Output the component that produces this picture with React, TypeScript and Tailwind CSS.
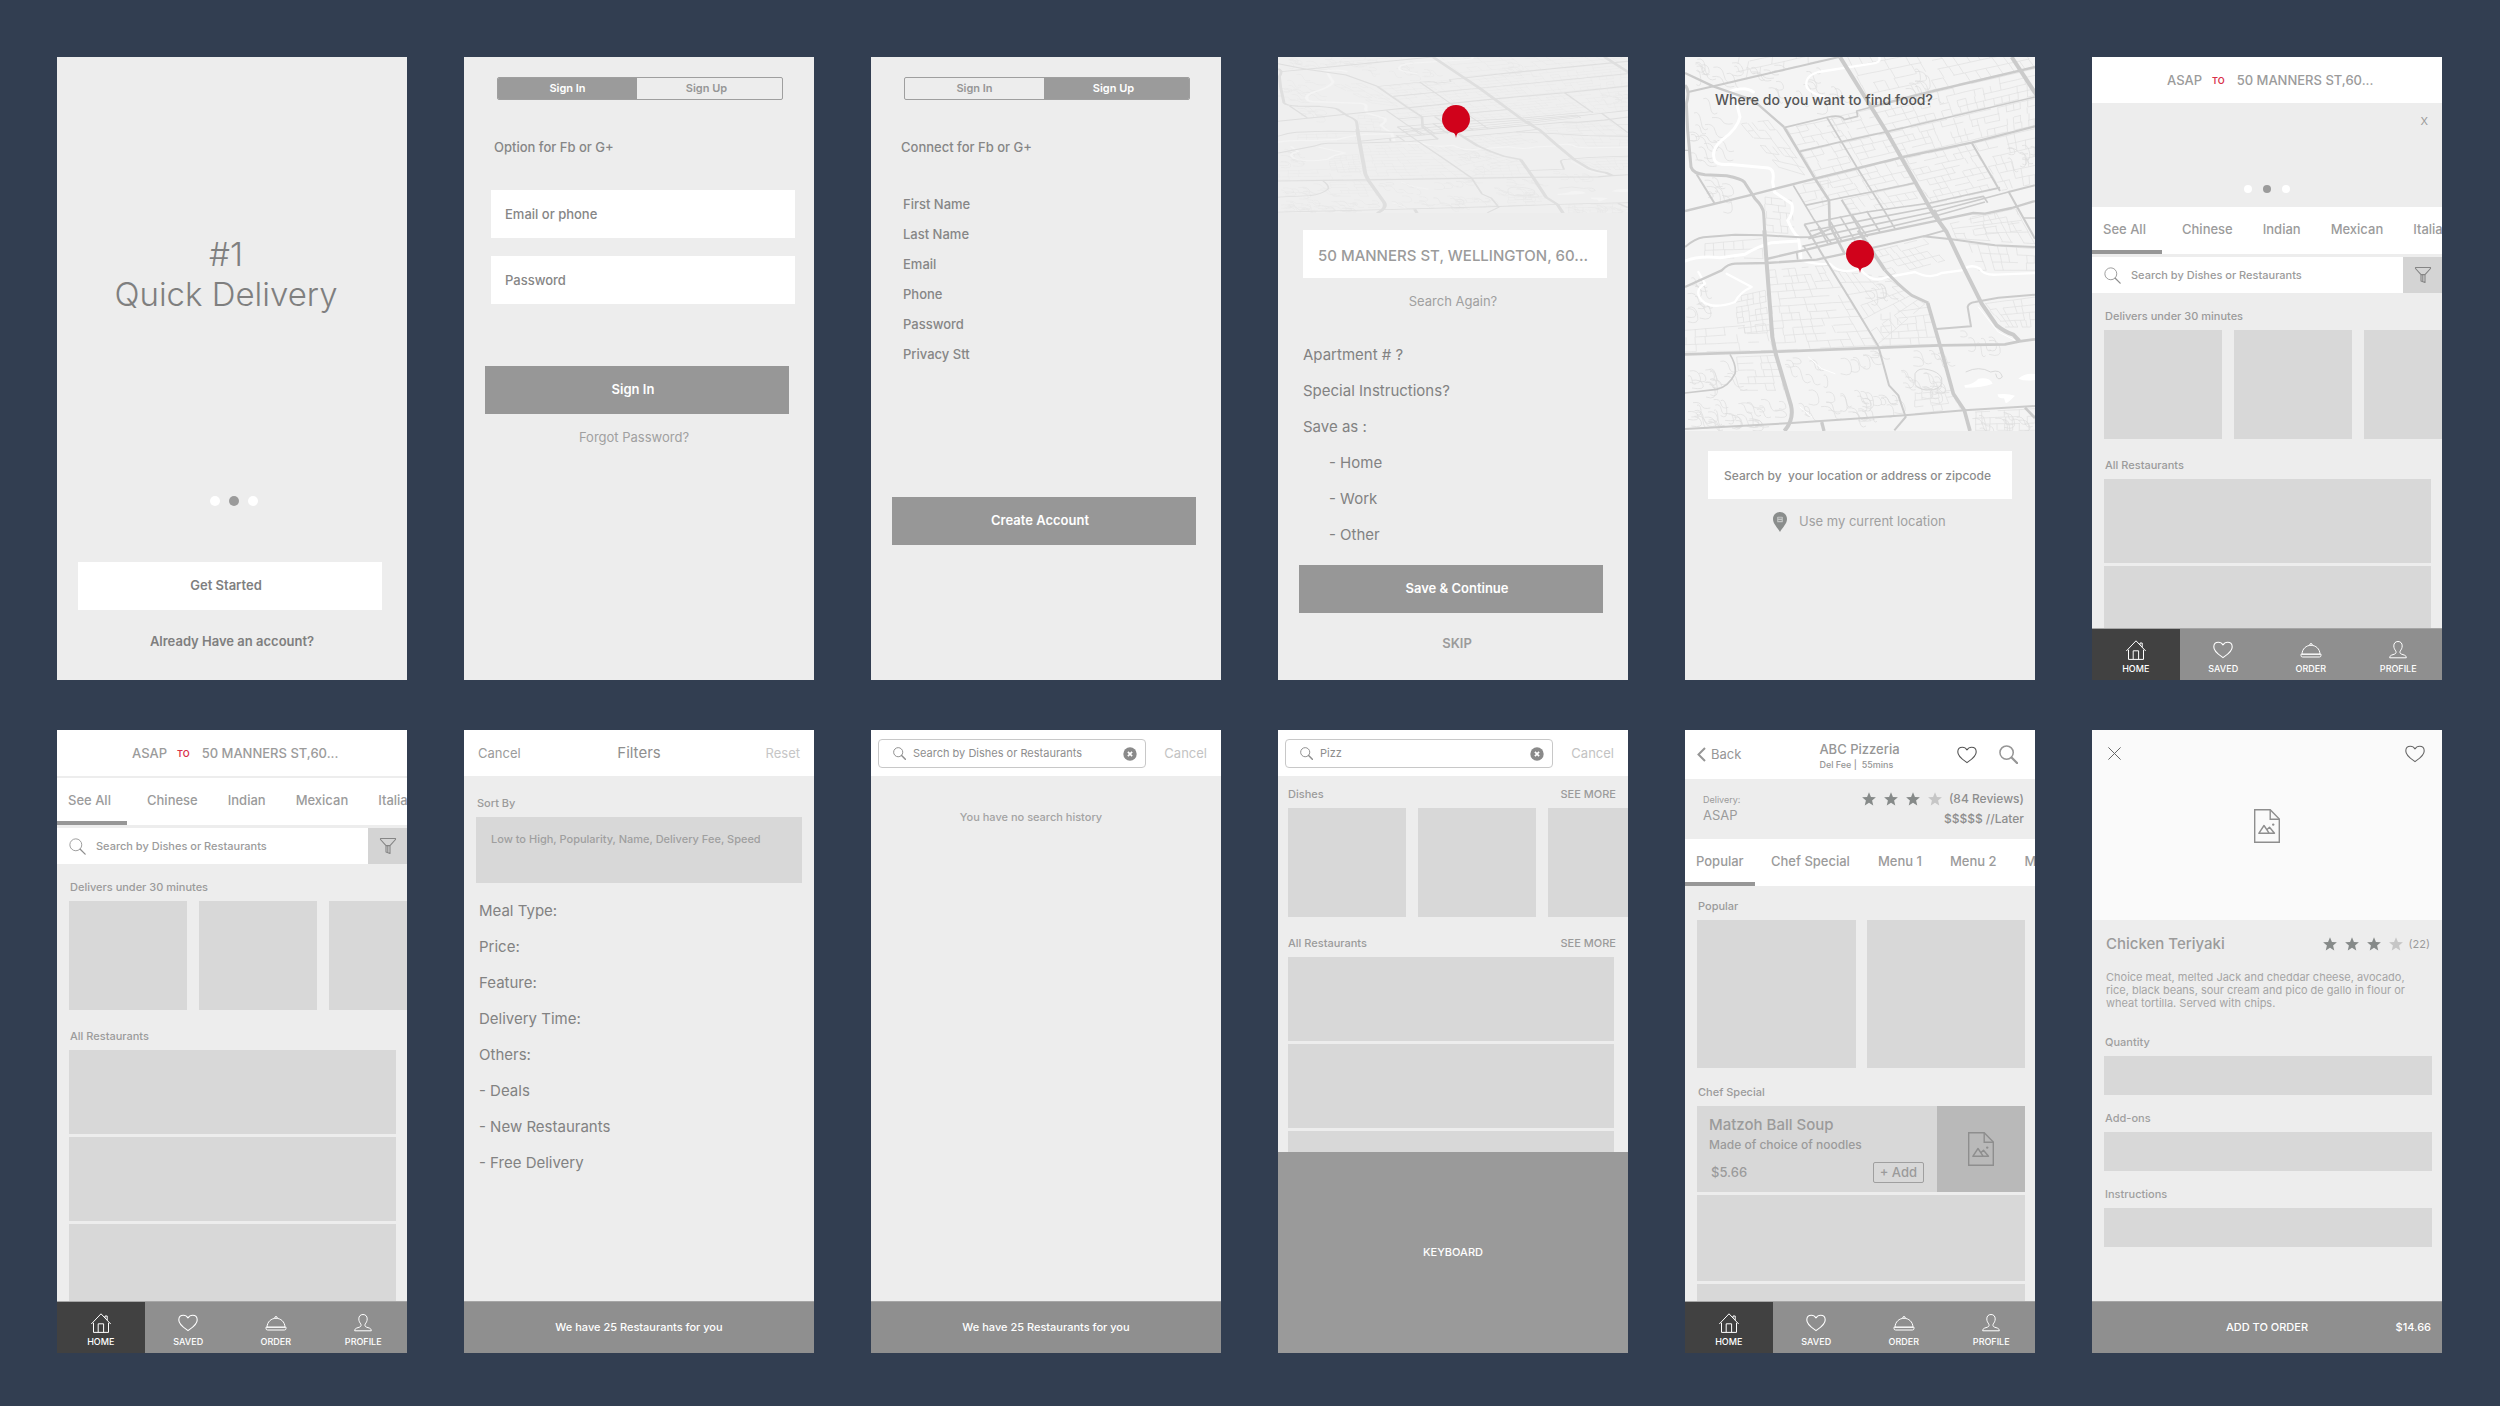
import React from "react";

type Children = { children?: React.ReactNode };

/* ------------------------------------------------------------------ */
/* Icons                                                               */
/* ------------------------------------------------------------------ */

function SearchIcon({ className = "size-4", weight = 1.2 }: { className?: string; weight?: number }) {
  return (
    <svg viewBox="0 0 20 20" className={className} fill="none" stroke="currentColor" strokeWidth={weight} aria-hidden="true">
      <circle cx="8" cy="8" r="7" />
      <path d="M13.2 13.2 19 19" strokeWidth={weight * 1.5} strokeLinecap="round" />
    </svg>
  );
}

function HeartIcon({ className = "size-5" }: { className?: string }) {
  return (
    <svg viewBox="0 0 20 20" className={className} fill="none" stroke="currentColor" strokeWidth="1.1" strokeLinejoin="round" aria-hidden="true">
      <path d="M10 17.6C7.2 15.4.8 11.8.8 6.9.8 4 2.800 2.200 5.400 2.200 7.400 2.200 9 3.200 10 4.900 11 3.200 12.600 2.200 14.600 2.200 17.200 2.200 19.200 4 19.200 6.900 19.200 11.800 12.800 15.400 10 17.600Z" />
    </svg>
  );
}

function HomeIcon() {
  return (
    <svg viewBox="0 0 20 20" className="size-5" fill="none" stroke="currentColor" strokeWidth="1" strokeLinejoin="round" aria-hidden="true">
      <path d="M2.500 9.800V19.400H17.500V9.800" />
      <path d="M.5 10.800 10 .8l9.500 10" strokeLinecap="round" />
      <path d="M14 4.800V3h2.200v4.200" />
      <path d="M7.200 19.400v-8.600h5.400v8.600" />
    </svg>
  );
}

function ClocheIcon() {
  return (
    <svg viewBox="0 0 22 20" className="h-5 w-[22px]" fill="none" stroke="currentColor" strokeWidth="1" strokeLinejoin="round" aria-hidden="true">
      <path d="M2 14.200C2.200 8.800 6.200 5.300 11 5.300s8.800 3.500 9 8.900Z" />
      <path d="M1 14.200h20v1.200q0 1.600-1.600 1.600H2.600Q1 17 1 15.400Z" />
      <path d="M9.700 5.200q0-1.700 1.300-1.700t1.300 1.700" />
    </svg>
  );
}

function PersonIcon() {
  return (
    <svg viewBox="0 0 20 20" className="size-5" fill="none" stroke="currentColor" strokeWidth="1" strokeLinejoin="round" aria-hidden="true">
      <path d="M10 1.500c2.700 0 4.200 1.800 4.200 4.400 0 2.300-1 3.700-1.900 5 -.7 1.200-.4 2.600.9 3.100l3.200 1.100c1.300.5 1.900 1.300 1.900 2.700H1.700c0-1.400.6-2.200 1.900-2.700l3.200-1.100c1.300-.5 1.600-1.900.9-3.100-.9-1.300-1.900-2.700-1.900-5 0-2.600 1.500-4.400 4.200-4.400Z" />
    </svg>
  );
}

function FunnelIcon() {
  return (
    <svg viewBox="0 0 18 18" className="size-[18px]" fill="none" stroke="currentColor" strokeWidth="1.100" strokeLinejoin="round" aria-hidden="true">
      <path d="M1.500 1.500h15v1L11 8.600v7.900l-4-1.600V8.600L1.500 2.500Z" />
      <path d="M7 8.600h4M8.800 8.600v7" />
    </svg>
  );
}

function ClearIcon() {
  return (
    <svg viewBox="0 0 14 14" className="size-3.5" aria-hidden="true">
      <circle cx="7" cy="7" r="6.700" fill="#8a8a8a" />
      <path d="m4.900 4.900 4.200 4.200m0-4.200L4.900 9.100" stroke="#fff" strokeWidth="1.700" />
    </svg>
  );
}

function PictureIcon() {
  return (
    <svg viewBox="0 0 26 34" className="h-[34px] w-[26px]" fill="none" stroke="currentColor" strokeWidth="1.400" aria-hidden="true">
      <path d="M.7.700H16.200L25.300 10V33.300H.7Z" />
      <path d="M16.200.700V10.300H25.300" />
      <path d="M4.800 24.300 10 16.500l5.300 7.800Z" strokeLinejoin="round" />
      <path d="m12.800 20.700 2.700-2.500 5 6.100h-5.200" strokeLinejoin="round" />
      <circle cx="19.200" cy="15.600" r="1.200" fill="currentColor" stroke="none" />
    </svg>
  );
}

function StarIcon({ dim }: { dim?: boolean }) {
  return (
    <svg viewBox="0 0 24 24" className="size-3.5" fill={dim ? "#c6c6c6" : "#868a89"} aria-hidden="true">
      <path d="m12 .5 3.300 7.900 8.500.700-6.500 5.600 2 8.300L12 18.600l-7.300 4.400 2-8.300L.2 9.100l8.500-.700Z" />
    </svg>
  );
}

function Stars() {
  return (
    <span className="flex gap-2" role="img" aria-label="3 of 4 stars">
      <StarIcon />
      <StarIcon />
      <StarIcon />
      <StarIcon dim />
    </span>
  );
}

function RedPin() {
  return (
    <svg viewBox="0 0 86 101" className="h-[33px] w-7" fill="#d0021b" aria-hidden="true">
      <circle cx="43" cy="43" r="43" />
      <path d="M32 82q9 5 11 19 2-14 11-19Z" />
    </svg>
  );
}

/* ------------------------------------------------------------------ */
/* Map                                                                 */
/* ------------------------------------------------------------------ */

type Pt = [number, number];

/* Local streets of one district: a broken lattice stretched over four corners. */
function district(corners: [Pt, Pt, Pt, Pt], cols: number, rows: number, seed: number): string {
  let s = seed * 7919 + 13;
  const rand = () => {
    s = (s * 1103515245 + 12345) % 2147483648;
    return s / 2147483648;
  };
  const [a, b, c, d] = corners;
  const at = (u: number, v: number) => {
    const x = (a[0] * (1 - u) + b[0] * u) * (1 - v) + (d[0] * (1 - u) + c[0] * u) * v;
    const y = (a[1] * (1 - u) + b[1] * u) * (1 - v) + (d[1] * (1 - u) + c[1] * u) * v;
    return `${x.toFixed(0)} ${y.toFixed(0)}`;
  };
  let path = "";
  for (let j = 0; j <= rows; j++) {
    for (let i = 0; i < cols; i++) {
      if (rand() < 0.78) path += `M${at(i / cols, j / rows)}L${at((i + 1) / cols, j / rows)}`;
    }
  }
  for (let i = 0; i <= cols; i++) {
    for (let j = 0; j < rows; j++) {
      if (rand() < 0.62) {
        const o = (rand() - 0.5) * 0.25;
        const u = (i + o) / cols;
        path += `M${at(u, j / rows)}L${at(u, (j + 1) / rows)}`;
      }
    }
  }
  return path;
}

/* Winding suburb streets. */
function suburb(x: number, y: number, w: number, h: number, n: number, seed: number): string {
  let s = seed * 104729 + 7;
  const rand = () => {
    s = (s * 1103515245 + 12345) % 2147483648;
    return s / 2147483648;
  };
  let path = "";
  for (let k = 0; k < n; k++) {
    const px = x + rand() * w;
    const py = y + rand() * h;
    const dx = 12 + rand() * 22;
    const dy = 8 + rand() * 18;
    path += `M${px.toFixed(0)} ${py.toFixed(0)}q${(dx * 0.8).toFixed(0)} ${(-dy * 0.3).toFixed(0)} ${dx.toFixed(0)} ${dy.toFixed(0)}t${(rand() < 0.5 ? -dx : dx).toFixed(0)} ${(dy * 0.8).toFixed(0)}`;
  }
  return path;
}

const LOCAL_STREETS = [
  district([[490, 0], [960, -90], [1050, 30], [560, 140]], 15, 5, 1),
  district([[560, 150], [1050, 35], [1050, 115], [605, 222]], 18, 4, 2),
  district([[610, 228], [1050, 125], [1050, 205], [650, 298]], 20, 4, 3),
  district([[305, 215], [470, 180], [515, 248], [345, 280]], 6, 4, 4),
  district([[440, 182], [565, 155], [605, 222], [475, 250]], 5, 3, 5),
  district([[348, 285], [610, 228], [650, 300], [392, 362]], 9, 4, 6),
  district([[395, 368], [655, 304], [697, 374], [440, 430]], 9, 4, 7),
  district([[663, 304], [860, 260], [940, 395], [742, 440]], 9, 8, 8),
  district([[870, 258], [1050, 215], [1050, 380], [950, 400]], 6, 6, 9),
  district([[470, 430], [697, 378], [740, 440], [500, 470]], 9, 3, 10),
  district([[330, 385], [430, 370], [432, 440], [370, 460]], 4, 3, 11),
  district([[170, 200], [250, 190], [380, 360], [280, 330]], 5, 6, 12),
  district([[560, 585], [715, 545], [780, 610], [610, 655]], 8, 4, 13),
  district([[795, 500], [990, 455], [1050, 560], [815, 545]], 7, 3, 14),
  district([[850, 560], [1050, 575], [1050, 640], [880, 640]], 7, 3, 15),
  district([[250, 640], [430, 625], [575, 865], [270, 880]], 9, 11, 16),
  district([[440, 640], [600, 660], [720, 740], [580, 860]], 8, 6, 17),
  district([[590, 770], [735, 750], [760, 862], [590, 865]], 6, 5, 18),
  district([[240, 420], [320, 430], [330, 530], [245, 525]], 4, 5, 19),
  district([[60, 560], [230, 545], [235, 605], [60, 600]], 6, 2, 20),
  district([[150, 720], [240, 700], [255, 820], [160, 830]], 5, 7, 21),
  district([[0, 820], [240, 800], [260, 880], [0, 885]], 8, 3, 22),
  district([[900, 740], [1050, 720], [1050, 810], [960, 810]], 7, 4, 23),
  district([[155, 900], [270, 895], [300, 1000], [165, 1000]], 5, 5, 24),
  district([[690, 1010], [800, 1000], [825, 1055], [690, 1070]], 5, 3, 25),
  district([[870, 1065], [1050, 1055], [1050, 1120], [870, 1120]], 8, 3, 26),
  district([[860, 480], [990, 450], [1010, 520], [870, 535]], 4, 3, 27),
  district([[130, 0], [440, -60], [450, 0], [110, 80]], 9, 3, 28),
];

const SUBURB_STREETS = [
  suburb(10, 120, 90, 190, 16, 1),
  suburb(0, 0, 250, 60, 16, 2),
  suburb(250, 20, 200, 110, 14, 3),
  suburb(620, 30, 130, 70, 8, 4),
  suburb(0, 1020, 290, 80, 34, 5),
  suburb(0, 910, 130, 70, 14, 6),
  suburb(290, 900, 130, 60, 8, 7),
  suburb(330, 1000, 300, 70, 30, 8),
  suburb(640, 880, 130, 120, 22, 9),
  suburb(850, 1065, 190, 50, 14, 10),
  suburb(0, 650, 60, 150, 12, 11),
  suburb(540, 670, 60, 40, 6, 12),
  suburb(460, 870, 110, 40, 8, 13),
  suburb(960, 260, 80, 60, 8, 14),
  suburb(820, 820, 110, 40, 6, 15),
  suburb(40, 360, 90, 70, 8, 16),
];

const ROADS: { w: number; d: string }[] = [
  { w: 12, d: "M465 0 605 225 745 470 785 525 835 630 890 740 935 805Q960 825 985 833L1003 852" },
  { w: 12, d: "M745 460 765 495" },
  { w: 9, d: "M0 85Q16 100 4 140L8 220 18 330Q24 350 60 353L125 356Q170 365 178 375L210 425Q235 450 236 470L240 540" },
  { w: 12, d: "M238 520 245 620 262 840 272 890 318 1045Q328 1088 298 1122" },
  { w: 7, d: "M0 48 85 88 205 130 297 210" },
  { w: 8, d: "M297 210 390 365 432 430 434 505 480 592" },
  { w: 6, d: "M470 428 525 520" },
  { w: 11, d: "M520 520 600 640" },
  { w: 9, d: "M600 640Q640 685 680 715L730 738" },
  { w: 11, d: "M728 738 765 865 805 1010 838 1060 855 1122" },
  { w: 7, d: "M0 462 205 412 390 365 655 300 860 257 1050 208" },
  { w: 6, d: "M10 105 85 88 462 0" },
  { w: 5, d: "M297 212 430 180Q468 172 478 188L518 178 515 162 560 150" },
  { w: 7, d: "M560 150 690 115 860 75 1050 30" },
  { w: 5, d: "M345 283 470 254 610 223 1050 120" },
  { w: 12, d: "M980 0 1055 115" },
  { w: 6, d: "M860 257 945 402" },
  { w: 5, d: "M360 445 480 420 560 405 695 377" },
  { w: 6, d: "M0 570Q30 545 55 541L150 533 240 535 345 541 375 540 445 512" },
  { w: 5, d: "M358 502 545 465 735 438 945 392" },
  { w: 5, d: "M375 522 560 485 745 450 895 418 908 437" },
  { w: 5, d: "M370 545 580 500 745 465 970 405" },
  { w: 6, d: "M970 405 1050 385" },
  { w: 5, d: "M352 568 525 530 740 480 900 435" },
  { w: 7, d: "M245 606 355 580 540 536 760 490 865 468 900 470 980 453 1050 432" },
  { w: 7, d: "M0 690 110 640Q130 620 150 620L245 618 395 608 480 590" },
  { w: 6, d: "M560 573 715 538 800 547 930 565 1050 570" },
  { w: 5, d: "M715 538 780 520" },
  { w: 5, d: "M325 385 385 485 440 560" },
  { w: 6, d: "M358 502 415 598 500 735 580 868 612 985 640 1015 662 1080 628 1120" },
  { w: 5, d: "M425 180 515 330 600 465 630 515" },
  { w: 5, d: "M355 565 380 605M437 495 470 552M465 478 510 550M500 472 548 540M545 462 585 525M335 585 338 608M400 510 430 562" },
  { w: 8, d: "M0 892 270 884 765 865 960 862 1003 853 1050 847" },
  { w: 6, d: "M0 1116 320 1098 660 1075 838 1060 1050 1047" },
  { w: 10, d: "M410 1095 417 1122" },
  { w: 5, d: "M135 892Q155 925 150 950 130 990 95 997L0 1008" },
  { w: 6, d: "M755 816 858 808 848 750Q850 738 870 735L940 722 1050 713" },
  { w: 6, d: "M970 403 1050 545" },
  { w: 4, d: "M1015 483H1050M0 280H10" },
  { w: 8, d: "M1020 1052 1050 1083" },
  { w: 6, d: "M35 352 88 438" },
];

function CityMap({ className }: { className: string }) {
  return (
    <svg viewBox="0 0 1050 1122" preserveAspectRatio="none" className={className} fill="none" aria-hidden="true">
      <rect width="1050" height="1122" fill="#f4f4f4" />
      <path d={LOCAL_STREETS.join("")} stroke="#e0e0e0" strokeWidth="2" />
      <path d={SUBURB_STREETS.join("")} stroke="#dcdcdc" strokeWidth="2" />
      <path d="M690 950q10-20 40-12 30 6 40 25 5 30-25 35-40 5-55-15ZM842 945q40-20 75 0 30-10 35 15-15 15-20-10" stroke="#dadada" strokeWidth="3" />
      <g stroke="#fff" strokeWidth="9" strokeLinejoin="round" strokeLinecap="round">
        <path d="M583 0Q588 18 560 20L400 45Q355 58 366 92 380 110 415 118" strokeWidth="7" />
        <path d="M130 105Q180 85 205 105M150 120 165 180Q158 215 110 250 75 280 90 312 100 325 130 322L250 333Q270 338 263 375L268 405 320 440Q328 465 308 490 325 530 340 540L348 602" />
        <path d="M0 612Q40 595 105 602L180 592Q215 570 260 557L340 552" />
        <path d="M350 610Q400 625 435 620 465 655 525 635 560 680 600 662L690 645Q735 668 770 648L830 640Q860 618 885 635 895 655 935 653L1050 648" strokeWidth="7" />
        <path d="M125 650 200 690Q165 705 150 735 80 760 50 730 25 700 60 680L40 645" strokeWidth="7" />
        <path d="M880 750 940 825 990 850M370 900 410 935 450 950M345 1050 380 1080" strokeWidth="3" />
      </g>
      <path d="M838 985q30-5 42-20 35-5 43 15-30 12-83 12ZM1000 965q20-18 50-14v18q-30 5-50-4ZM938 1012q30-4 52 4-25 25-28 22l-5-14q-20 0-19-12Z" fill="#fff" />
      <g stroke="#cbcbcb" strokeLinejoin="round">
        {ROADS.map((r) => (
          <path key={r.d} d={r.d} strokeWidth={r.w} />
        ))}
      </g>
    </svg>
  );
}

/* ------------------------------------------------------------------ */
/* Shared pieces                                                       */
/* ------------------------------------------------------------------ */

function Phone({ label, children }: Children & { label: string }) {
  return (
    <section aria-label={label} className="flex min-h-[623px] flex-col overflow-hidden bg-[#ededed]">
      {children}
    </section>
  );
}

function Dots({ className, dot }: { className: string; dot: string }) {
  return (
    <div className={`flex ${className}`} aria-hidden="true">
      <span className={`rounded-full bg-white ${dot}`} />
      <span className={`rounded-full bg-[#9b9b9b] ${dot}`} />
      <span className={`rounded-full bg-white ${dot}`} />
    </div>
  );
}

function Segments({ active }: { active: 0 | 1 }) {
  const on = "bg-[#9b9b9b] text-white";
  const off = "text-[#969696]";
  return (
    <div className="mt-5 mr-[31px] ml-[33px] flex h-[23px] overflow-hidden rounded-[2px] border border-[#9f9f9f] text-[11px] font-semibold">
      <button className={`flex-1 ${active === 0 ? on : off}`}>Sign In</button>
      <button className={`flex-1 pr-1.5 ${active === 1 ? on : off}`}>Sign Up</button>
    </div>
  );
}

function PrimaryButton({ className, children }: Children & { className: string }) {
  return (
    <button className={`mr-[25px] ml-[21px] h-12 bg-[#979797] text-[13px] font-semibold text-white ${className}`}>
      {children}
    </button>
  );
}

function DeliveryHeader() {
  return (
    <header className="flex h-[46px] shrink-0 items-center bg-white pt-0.5 pl-[75px] text-[13px] font-medium text-[#9b9b9b]">
      <span>ASAP</span>
      <span className="mr-3 ml-2.5 text-[9px] font-semibold text-[#d9304a]">TO</span>
      <span className="whitespace-nowrap">50 MANNERS ST,60...</span>
    </header>
  );
}

function Tabs({ items, gap, firstGap }: { items: string[]; gap: string; firstGap: string }) {
  return (
    <nav className="flex h-[47px] shrink-0 overflow-hidden bg-white text-[13px] font-medium text-[#9b9b9b]">
      <button className={`w-[70px] shrink-0 border-b-4 border-[#979797] pt-0.5 pl-[11px] text-left ${firstGap}`}>
        {items[0]}
      </button>
      <div className={`flex ${gap}`}>
        {items.slice(1).map((item) => (
          <button key={item} className="shrink-0 border-b-4 border-transparent pt-0.5 whitespace-nowrap">
            {item}
          </button>
        ))}
      </div>
    </nav>
  );
}

const CUISINES = ["See All", "Chinese", "Indian", "Mexican", "Italian"];

function SearchRow() {
  return (
    <div className="mt-[3px] flex h-9 shrink-0 bg-white">
      <label className="flex flex-1 items-center gap-2.5 pl-3 text-[#8e8e8e]">
        <SearchIcon className="size-[17px]" weight={1} />
        <input
          type="text"
          aria-label="Search"
          placeholder="Search by Dishes or Restaurants"
          className="w-full min-w-0 flex-1 text-[11px] font-medium outline-none placeholder:text-[#9b9b9b]"
        />
      </label>
      <button aria-label="Filter" className="flex w-[39px] items-center justify-center bg-[#d4d4d4] text-[#858585]">
        <FunnelIcon />
      </button>
    </div>
  );
}

function SectionTitle({ className = "", children }: Children & { className?: string }) {
  return <h3 className={`text-[11px] leading-4 font-medium text-[#9b9b9b] ${className}`}>{children}</h3>;
}

function Tiles() {
  return (
    <div className="flex gap-3 overflow-hidden">
      {[0, 1, 2].map((n) => (
        <div key={n} className="h-[109px] w-[118px] shrink-0 bg-[#d8d8d8]" />
      ))}
    </div>
  );
}

function Rows({ count }: { count: number }) {
  return (
    <div className="mt-1.5 mr-[11px] flex flex-col gap-[3px]">
      {Array.from({ length: count }, (_, n) => (
        <div key={n} className="h-[84px] shrink-0 bg-[#d8d8d8]" />
      ))}
    </div>
  );
}

function RestaurantLists() {
  return (
    <main className="flex-1 overflow-hidden pt-[15px] pl-3 contain-size">
      <SectionTitle className="mb-1.5 pl-px">Delivers under 30 minutes</SectionTitle>
      <Tiles />
      <SectionTitle className="mt-[18px] pl-px">All Restaurants</SectionTitle>
      <Rows count={3} />
    </main>
  );
}

function BottomNav() {
  const items = [
    { name: "HOME", icon: <HomeIcon />, on: true },
    { name: "SAVED", icon: <HeartIcon className="size-5" />, on: false },
    { name: "ORDER", icon: <ClocheIcon />, on: false },
    { name: "PROFILE", icon: <PersonIcon />, on: false },
  ];
  return (
    <nav className="grid h-[52px] shrink-0 grid-cols-4 border-t border-[#a6a6a6] bg-[#8f8f8f] text-[9px] font-medium text-white">
      {items.map((item) => (
        <button
          key={item.name}
          className={`flex flex-col items-center gap-[3px] pt-[11px] leading-3 ${item.on ? "bg-[#414141]" : ""}`}
        >
          {item.icon}
          <span>{item.name}</span>
        </button>
      ))}
    </nav>
  );
}

function SearchHeader({ value }: { value?: string }) {
  return (
    <header className="flex h-[46px] shrink-0 items-center bg-white pt-px pr-3.5 pl-[7px]">
      <div className="mr-[18px] flex h-[29px] min-w-0 flex-1 items-center rounded-[4px] border border-[#c8c8c8] pr-2 pl-3.5 text-[#8e8e8e]">
        <SearchIcon className="size-[13px] shrink-0" weight={1.5} />
        <input
          type="text"
          aria-label="Search"
          placeholder="Search by Dishes or Restaurants"
          defaultValue={value}
          className="ml-[7px] w-full min-w-0 flex-1 text-[11px] text-[#8e8e8e] outline-none placeholder:text-[#8e8e8e]"
        />
        <button aria-label="Clear search">
          <ClearIcon />
        </button>
      </div>
      <button className="text-[13px] text-[#c3c3c3]">Cancel</button>
    </header>
  );
}

function ResultsBar() {
  return (
    <button className="h-[52px] shrink-0 border-t border-[#a6a6a6] bg-[#8f8f8f] text-[11px] font-medium text-white">
      We have 25 Restaurants for you
    </button>
  );
}

/* ------------------------------------------------------------------ */
/* Screens                                                             */
/* ------------------------------------------------------------------ */

function Welcome() {
  return (
    <Phone label="Welcome">
      <h1 className="mt-[177px] pr-3 text-center text-[33px] leading-10 font-light text-[#7f7f7f]">
        #1
        <br />
        Quick Delivery
      </h1>
      <Dots className="mt-[182px] justify-center gap-[9px] pl-1" dot="size-2.5" />
      <button className="mt-14 mr-[25px] ml-[21px] h-12 bg-white pr-2 text-[13px] font-semibold text-[#7f7f7f]">
        Get Started
      </button>
      <a href="#sign-in" className="mt-[21px] text-center text-[13px] leading-5 font-semibold text-[#7f7f7f]">
        Already Have an account?
      </a>
    </Phone>
  );
}

function SignIn() {
  return (
    <Phone label="Sign in">
      <Segments active={0} />
      <p className="mt-[37px] ml-[30px] text-[13px] leading-5 font-medium text-[#868686]">Option for Fb or G+</p>
      <div className="mt-[33px] mr-[19px] ml-[27px] flex flex-col gap-[18px]">
        <input
          type="text"
          aria-label="Email or phone"
          placeholder="Email or phone"
          className="h-12 bg-white px-3.5 text-[13px] font-medium outline-none placeholder:text-[#868686]"
        />
        <input
          type="password"
          aria-label="Password"
          placeholder="Password"
          className="h-12 bg-white px-3.5 text-[13px] font-medium outline-none placeholder:text-[#868686]"
        />
      </div>
      <PrimaryButton className="mt-[62px] pr-2">Sign In</PrimaryButton>
      <a href="#forgot" className="mt-[13px] pr-2.5 text-center text-[13px] leading-5 text-[#a0a0a0]">
        Forgot Password?
      </a>
    </Phone>
  );
}

function SignUp() {
  const fields = ["First Name", "Last Name", "Email", "Phone", "Password", "Privacy Stt"];
  return (
    <Phone label="Sign up">
      <Segments active={1} />
      <p className="mt-[37px] ml-[30px] text-[13px] leading-5 font-medium text-[#868686]">Connect for Fb or G+</p>
      <ul className="mt-8 ml-8 text-[13px] leading-[30px] font-medium text-[#868686]">
        {fields.map((f) => (
          <li key={f}>{f}</li>
        ))}
      </ul>
      <PrimaryButton className="mt-32 pr-2">Create Account</PrimaryButton>
    </Phone>
  );
}

function AddressDetails() {
  return (
    <Phone label="Address details">
      <div className="relative">
        <CityMap className="block h-[156px] w-full opacity-40" />
        <div className="absolute inset-x-0 top-12 flex justify-center pl-1.5">
          <RedPin />
        </div>
      </div>
      <input
        type="text"
        aria-label="Address"
        defaultValue="50 MANNERS ST, WELLINGTON, 60..."
        className="mt-[17px] mr-[21px] ml-[25px] h-12 bg-white pt-0.5 pl-[15px] text-[15px] font-medium text-[#9b9b9b] outline-none"
      />
      <a href="#search" className="mt-[13px] text-center text-[13px] leading-5 text-[#a0a0a0]">
        Search Again?
      </a>
      <div className="mt-[26px] ml-[25px] text-[15px] leading-9 text-[#828282]">
        <p>Apartment # ?</p>
        <p>Special Instructions?</p>
        <p>Save as :</p>
        <ul className="pl-[26px]">
          <li>- Home</li>
          <li>- Work</li>
          <li>- Other</li>
        </ul>
      </div>
      <PrimaryButton className="mt-3 pl-3">Save &amp; Continue</PrimaryButton>
      <button className="mt-5 pl-2 text-[13px] leading-5 font-semibold text-[#9b9b9b]">SKIP</button>
    </Phone>
  );
}

function FindFood() {
  return (
    <Phone label="Find food">
      <div className="relative">
        <CityMap className="block h-[374px] w-full" />
        <h2 className="absolute top-[33px] left-[30px] text-[14px] leading-5 font-medium text-[#555]">
          Where do you want to find food?
        </h2>
        <div className="absolute inset-x-0 top-[183px] flex justify-center">
          <RedPin />
        </div>
      </div>
      <input
        type="text"
        aria-label="Location"
        placeholder="Search by  your location or address or zipcode"
        className="mt-5 mr-[23px] ml-[23px] h-12 bg-white pl-4 text-[12px] font-medium outline-none placeholder:text-[#8c8c8c]"
      />
      <button className="mt-3 flex items-center gap-3 pl-[88px] text-[13px] leading-[21px] text-[#a0a0a0]">
        <svg viewBox="0 0 14 20" className="h-5 w-3.5" aria-hidden="true">
          <path d="M7 0C3 0 0 3 0 7c0 4.800 4.500 8.500 7 13 2.500-4.500 7-8.200 7-13 0-4-3-7-7-7Z" fill="#8a8d8c" />
          <rect x="4.200" y="4.700" width="5.600" height="5.600" rx=".6" fill="#c5c7c6" />
          <path d="M5.300 6.200h3.400M5.300 8.500h3.400" stroke="#8a8d8c" strokeWidth=".9" />
        </svg>
        Use my current location
      </button>
    </Phone>
  );
}

function HomeWithBanner() {
  return (
    <Phone label="Home with banner">
      <DeliveryHeader />
      <div className="flex h-[104px] shrink-0 flex-col justify-between">
        <button aria-label="Close banner" className="mt-2 mr-3.5 self-end text-[11px] leading-5 text-[#9b9b9b]">
          X
        </button>
        <Dots className="mb-3.5 justify-center gap-[11px]" dot="size-2" />
      </div>
      <Tabs items={CUISINES} firstGap="mr-5" gap="gap-[30px]" />
      <SearchRow />
      <RestaurantLists />
      <BottomNav />
    </Phone>
  );
}

function Home() {
  return (
    <Phone label="Home">
      <div className="border-b-2 border-[#ededed]">
        <DeliveryHeader />
      </div>
      <Tabs items={CUISINES} firstGap="mr-5" gap="gap-[30px]" />
      <SearchRow />
      <RestaurantLists />
      <BottomNav />
    </Phone>
  );
}

function Filters() {
  const groups = ["Meal Type:", "Price:", "Feature:", "Delivery Time:", "Others:", "- Deals", "- New Restaurants", "- Free Delivery"];
  return (
    <Phone label="Filters">
      <header className="grid h-[46px] grid-cols-[1fr_auto_1fr] items-center bg-white px-3.5 pt-px text-[13px]">
        <button className="text-left text-[#9b9b9b]">Cancel</button>
        <h2 className="text-[15px] text-[#8f8f8f]">Filters</h2>
        <button className="text-right text-[#c6c6c6]">Reset</button>
      </header>
      <main className="flex-1 px-3 pt-[19px]">
        <SectionTitle className="pl-px">Sort By</SectionTitle>
        <p className="mt-1.5 h-[66px] bg-[#d8d8d8] px-[15px] pt-3.5 text-[11px] leading-4 font-medium whitespace-nowrap text-[#9f9f9f]">
          Low to High, Popularity, Name, Delivery Fee, Speed
        </p>
        <ul className="mt-2.5 pl-[3px] text-[15px] leading-9 text-[#828282]">
          {groups.map((g) => (
            <li key={g}>{g}</li>
          ))}
        </ul>
      </main>
      <ResultsBar />
    </Phone>
  );
}

function EmptySearch() {
  return (
    <Phone label="Search">
      <SearchHeader />
      <main className="flex-1 pt-[33px] pr-[30px] text-center text-[11px] leading-4 font-medium text-[#a3a3a3]">
        You have no search history
      </main>
      <ResultsBar />
    </Phone>
  );
}

function SearchResults() {
  return (
    <Phone label="Search results">
      <SearchHeader value="Pizz" />
      <main className="flex-1 overflow-hidden pt-2.5 pl-2.5 contain-size">
        <div className="mb-1.5 flex justify-between pr-3">
          <SectionTitle>Dishes</SectionTitle>
          <a href="#dishes" className="text-[11px] leading-4 font-medium text-[#9b9b9b]">SEE MORE</a>
        </div>
        <Tiles />
        <div className="mt-[18px] flex justify-between pr-3">
          <SectionTitle>All Restaurants</SectionTitle>
          <a href="#restaurants" className="text-[11px] leading-4 font-medium text-[#9b9b9b]">SEE MORE</a>
        </div>
        <div className="pr-[3px]">
          <Rows count={3} />
        </div>
      </main>
      <div className="flex h-[201px] shrink-0 items-center justify-center bg-[#9a9a9a] text-[11px] font-medium text-white">
        KEYBOARD
      </div>
    </Phone>
  );
}

function RestaurantMenu() {
  return (
    <Phone label="Restaurant menu">
      <header className="grid h-[49px] shrink-0 grid-cols-[1fr_auto_1fr] items-center bg-white pr-[17px] pl-3 text-[#969696]">
        <button className="flex items-center gap-[5px] text-[13px]">
          <svg viewBox="0 0 9 15" className="h-[15px] w-[9px]" fill="none" stroke="currentColor" strokeWidth="2" aria-hidden="true">
            <path d="M8 1 1.500 7.500 8 14" />
          </svg>
          Back
        </button>
        <div className="pl-1">
          <h2 className="text-[13px] leading-5 font-medium">ABC Pizzeria</h2>
          <p className="text-[9px] leading-3 font-medium whitespace-pre">Del Fee |  55mins</p>
        </div>
        <div className="flex items-center justify-end gap-[22px]">
          <button aria-label="Save restaurant" className="text-[#555]">
            <HeartIcon className="size-5" />
          </button>
          <button aria-label="Search menu">
            <SearchIcon className="size-[19px]" weight={1.6} />
          </button>
        </div>
      </header>
      <div className="flex h-[60px] shrink-0 justify-between pr-[11px] pl-[18px] text-[#8e8e8e]">
        <div className="pt-3.5 text-[#9b9b9b]">
          <p className="text-[9px] leading-[14px]">Delivery:</p>
          <p className="text-[13px] leading-4">ASAP</p>
        </div>
        <div className="pt-2.5 text-right text-xs leading-5 font-medium">
          <p className="flex items-center gap-[7px]">
            <Stars />
            (84 Reviews)
          </p>
          <p>$$$$$ //Later</p>
        </div>
      </div>
      <Tabs items={["Popular", "Chef Special", "Menu 1", "Menu 2", "Menu 3"]} firstGap="mr-4" gap="gap-7" />
      <main className="flex-1 overflow-hidden pt-3 pr-[10px] pl-3 contain-size">
        <SectionTitle className="pl-px">Popular</SectionTitle>
        <div className="mt-1.5 grid grid-cols-2 gap-[11px]">
          <div className="h-[148px] bg-[#d8d8d8]" />
          <div className="h-[148px] bg-[#d8d8d8]" />
        </div>
        <SectionTitle className="mt-4 pl-px">Chef Special</SectionTitle>
        <div className="mt-1.5 flex flex-col gap-[3px]">
          <article className="flex h-[86px] bg-[#d8d8d8] font-medium text-[#9b9b9b]">
            <div className="flex flex-1 flex-col pt-2 pr-[13px] pl-3">
              <h4 className="text-[15px] leading-[22px]">Matzoh Ball Soup</h4>
              <p className="text-xs leading-[18px]">Made of choice of noodles</p>
              <div className="mt-2 flex items-center justify-between pl-0.5 text-[13px]">
                <span>$5.66</span>
                <button className="h-[21px] rounded-[2px] border border-[#9f9f9f] px-1.5 leading-none">+ Add</button>
              </div>
            </div>
            <div className="flex w-[88px] items-center justify-center bg-[#b9b9b9] text-[#8e8e8e]">
              <PictureIcon />
            </div>
          </article>
          <div className="h-[86px] bg-[#d8d8d8]" />
          <div className="h-[86px] bg-[#d8d8d8]" />
        </div>
      </main>
      <BottomNav />
    </Phone>
  );
}

function DishDetails() {
  return (
    <Phone label="Dish details">
      <div className="grid h-[190px] grid-cols-[1fr_auto_1fr] items-start bg-[#fafafa] pt-3.5 pr-[17px] pl-4 text-[#666]">
        <button aria-label="Close" className="justify-self-start pt-[3px]">
          <svg viewBox="0 0 13 13" className="size-[13px]" stroke="currentColor" strokeWidth="1" aria-hidden="true">
            <path d="m.4.4 12.200 12.200m0-12.200L.4 12.600" />
          </svg>
        </button>
        <div className="pt-[65px] text-[#8e8e8e]">
          <PictureIcon />
        </div>
        <button aria-label="Save dish" className="justify-self-end">
          <HeartIcon className="size-5" />
        </button>
      </div>
      <main className="flex-1 pr-[10px] pl-3">
        <div className="mt-[14px] flex items-center justify-between pr-0.5 pl-0.5">
          <h2 className="text-[15px] leading-5 font-medium text-[#9b9b9b]">Chicken Teriyaki</h2>
          <p className="flex items-center gap-1.5 text-[11px] text-[#9b9b9b]">
            <Stars />
            (22)
          </p>
        </div>
        <p className="mt-[17px] pr-5 pl-0.5 text-[11px] leading-[13px] text-[#a5a5a5]">
          Choice meat, melted Jack and cheddar cheese, avocado, rice, black beans, sour cream and pico de gallo in flour or
          wheat tortilla. Served with chips.
        </p>
        <div className="mt-6 flex flex-col gap-[15px]">
          {["Quantity", "Add-ons", "Instructions"].map((name) => (
            <label key={name} className="flex flex-col gap-1.5 text-[11px] leading-4 font-medium text-[#9f9f9f]">
              <span className="pl-px">{name}</span>
              <input type="text" className="h-[39px] bg-[#d8d8d8] px-3 outline-none" />
            </label>
          ))}
        </div>
      </main>
      <button className="grid h-[52px] shrink-0 grid-cols-[1fr_auto_1fr] items-center border-t border-[#a6a6a6] bg-[#8f8f8f] px-[11px] text-[11px] font-medium text-white">
        <span className="col-start-2">ADD TO ORDER</span>
        <span className="text-right">$14.66</span>
      </button>
    </Phone>
  );
}

export default function App() {
  return (
    <div className="grid min-h-screen grid-cols-6 content-start gap-x-[57px] gap-y-[50px] bg-[#323e51] pt-[57px] pr-[58px] pb-[53px] pl-[57px] font-['Inter',sans-serif]">
      <Welcome />
      <SignIn />
      <SignUp />
      <AddressDetails />
      <FindFood />
      <HomeWithBanner />
      <Home />
      <Filters />
      <EmptySearch />
      <SearchResults />
      <RestaurantMenu />
      <DishDetails />
    </div>
  );
}
